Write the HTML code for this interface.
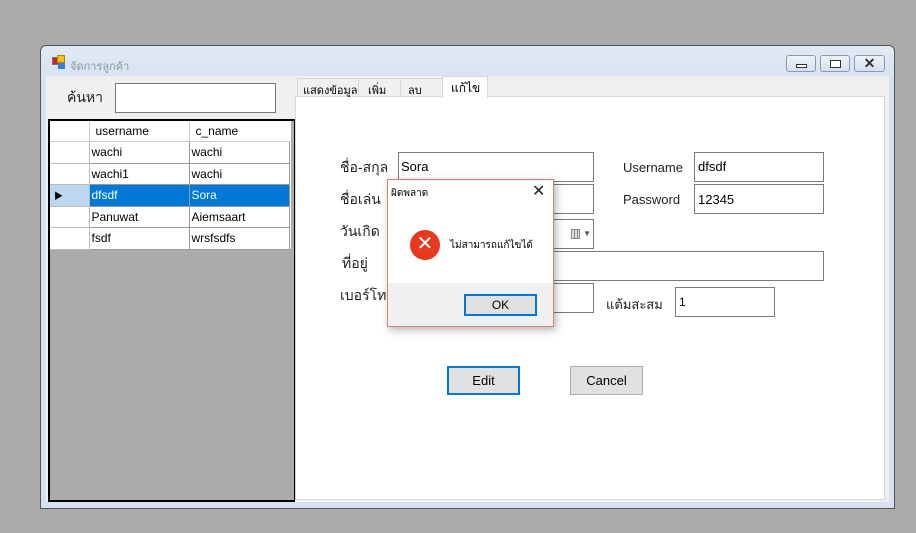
<!DOCTYPE html>
<html><head><meta charset="utf-8"><style>
*{box-sizing:border-box;margin:0;padding:0}
body{width:916px;height:533px;background:#ababab;position:relative;overflow:hidden;font-family:"Liberation Sans","Noto Sans CJK SC",sans-serif;font-size:12px;color:#000}
.a{position:absolute}
.tb{position:absolute;background:#fff;border:1px solid #7a7a7a}
.lbl{position:absolute;font-size:13px;color:#222;white-space:nowrap}
.wb{position:absolute;top:55px;width:30px;height:17px;border:1px solid #8a9ab0;border-radius:3px;background:linear-gradient(#eef3f9,#d5e0ee)}
</style></head><body>
<!-- window -->
<div class="a" style="left:40px;top:45px;width:855px;height:464px;background:linear-gradient(#e1e9f3,#d6e2f1 40px);border:1px solid #555;border-radius:6px 6px 0 0"></div>
<div class="a" style="left:52px;top:57px;width:8px;height:8px;background:#c22;border:1px solid #777"></div>
<div class="a" style="left:57px;top:55px;width:8px;height:8px;background:#f2c21a;border:1px solid #a80"></div>
<div class="a" style="left:58px;top:63px;width:7px;height:6px;background:#3a7de0"></div>
<div class="lbl" style="left:70px;top:57px;font-size:11px;color:#8a96a4">จัดการลูกค้า</div>
<div class="wb" style="left:786px"><div class="a" style="left:9px;top:8px;width:11px;height:4px;border:1px solid #333;background:#fff"></div></div>
<div class="wb" style="left:820px"><div class="a" style="left:9px;top:4px;width:11px;height:8px;border:1px solid #333;background:#fff"></div></div>
<div class="wb" style="left:854px;width:31px;text-align:center;line-height:15px;font-size:14px;color:#333;font-weight:bold">✕</div>
<!-- client -->
<div class="a" style="left:46px;top:76px;width:843px;height:426px;background:#f0f0f0"></div>
<div class="lbl" style="left:67px;top:87px;font-size:14px">ค้นหา</div>
<div class="tb" style="left:115px;top:83px;width:161px;height:30px;border-color:#777"></div>
<!-- grid -->
<div class="a" style="left:48px;top:119px;width:247px;height:383px;background:#ababab;border:2px solid #000;border-right-width:1px"></div>
<div class="a" style="left:50px;top:121px;width:241px;height:128px;background:#fff">
<table style="border-collapse:collapse;font-size:12px;width:240px;table-layout:fixed">
<tr style="height:20px"><td style="width:39px;border-right:1px solid #ccc;border-bottom:1px solid #ccc"></td><td style="width:100px;padding-left:6px;border-right:1px solid #ccc;border-bottom:1px solid #ccc">username</td><td style="padding-left:6px;border-bottom:1px solid #ccc">c_name</td></tr>
<tr style="height:22px"><td style="border:1px solid #bbb;border-left:0"></td><td style="border:1px solid #999;padding-left:2px">wachi</td><td style="border:1px solid #999;padding-left:2px">wachi</td></tr>
<tr style="height:21px"><td style="border:1px solid #bbb;border-left:0"></td><td style="border:1px solid #999;padding-left:2px">wachi1</td><td style="border:1px solid #999;padding-left:2px">wachi</td></tr>
<tr style="height:22px"><td style="background:#bcd7ef;border:1px solid #bbb;border-left:0;font-size:9px;padding-left:4px">▶</td><td style="background:#0078d7;color:#fff;border:1px solid #999;padding-left:2px">dfsdf</td><td style="background:#0078d7;color:#fff;border:1px solid #999;padding-left:2px">Sora</td></tr>
<tr style="height:21px"><td style="border:1px solid #bbb;border-left:0"></td><td style="border:1px solid #999;padding-left:2px">Panuwat</td><td style="border:1px solid #999;padding-left:2px">Aiemsaart</td></tr>
<tr style="height:22px"><td style="border:1px solid #bbb;border-left:0"></td><td style="border:1px solid #999;padding-left:2px">fsdf</td><td style="border:1px solid #999;padding-left:2px">wrsfsdfs</td></tr>
</table></div>
<!-- tabs -->
<div class="a" style="left:295px;top:96px;width:590px;height:404px;background:#fff;border:1px solid #d8d8d8"></div>
<div class="a" style="left:297px;top:78px;width:62px;height:19px;border:1px solid #d8d8d8;background:#f0f0f0;font-size:11px;padding:2px 0 0 5px">แสดงข้อมูล</div>
<div class="a" style="left:358px;top:78px;width:43px;height:19px;border:1px solid #d8d8d8;background:#f0f0f0;font-size:11px;padding:2px 0 0 9px">เพิ่ม</div>
<div class="a" style="left:400px;top:78px;width:43px;height:19px;border:1px solid #d8d8d8;background:#f0f0f0;font-size:11px;padding:2px 0 0 7px">ลบ</div>
<div class="a" style="left:442px;top:76px;width:46px;height:22px;border:1px solid #d8d8d8;border-bottom:0;background:#fff;font-size:12px;padding:2px 0 0 8px">แก้ไข</div>
<!-- form -->
<div class="lbl" style="left:340px;top:157px;font-size:14px">ชื่อ-สกุล</div>
<div class="tb" style="left:398px;top:152px;width:196px;height:30px;font-size:13px;padding:6px 2px">Sora</div>
<div class="lbl" style="left:340px;top:189px;font-size:14px">ชื่อเล่น</div>
<div class="tb" style="left:398px;top:184px;width:196px;height:30px"></div>
<div class="lbl" style="left:340px;top:221px;font-size:14px">วันเกิด</div>
<div class="tb" style="left:398px;top:219px;width:196px;height:30px"><div class="a" style="right:13px;top:9px;width:9px;height:10px;border:1px solid #888;background:repeating-linear-gradient(90deg,#ddd 0 2px,#888 2px 3px)"></div><div class="a" style="right:2px;top:9px;font-size:8px;color:#456">▼</div></div>
<div class="lbl" style="left:342px;top:253px;font-size:14px">ที่อยู่</div>
<div class="tb" style="left:398px;top:251px;width:426px;height:30px"></div>
<div class="lbl" style="left:340px;top:285px;font-size:14px">เบอร์โทร</div>
<div class="tb" style="left:398px;top:283px;width:196px;height:30px"></div>
<div class="lbl" style="left:623px;top:160px;font-size:13px">Username</div>
<div class="tb" style="left:694px;top:152px;width:130px;height:30px;font-size:13px;padding:6px 3px">dfsdf</div>
<div class="lbl" style="left:623px;top:192px;font-size:13px">Password</div>
<div class="tb" style="left:694px;top:184px;width:130px;height:30px;font-size:13px;padding:7px 3px">12345</div>
<div class="lbl" style="left:606px;top:294px;font-size:13px">แต้มสะสม</div>
<div class="tb" style="left:675px;top:287px;width:100px;height:30px;font-size:12px;padding:7px 3px">1</div>
<div class="a" style="left:447px;top:366px;width:73px;height:29px;border:2px solid #0078d7;background:#e1e1e1;text-align:center;line-height:25px;font-size:13px">Edit</div>
<div class="a" style="left:570px;top:366px;width:73px;height:29px;border:1px solid #adadad;background:#e1e1e1;text-align:center;line-height:27px;font-size:13px">Cancel</div>
<!-- dialog -->
<div class="a" style="left:387px;top:179px;width:167px;height:148px;background:#fff;border:1px solid #e0806f;box-shadow:2px 3px 8px rgba(0,0,0,.3)">
<div class="a" style="left:3px;top:6px;font-size:10px">ผิดพลาด</div>
<div class="a" style="left:144px;top:1px;font-size:16px;color:#222">✕</div>
<div class="a" style="left:22px;top:50px;width:30px;height:30px;border-radius:50%;background:#e8391e;color:#fff;text-align:center;line-height:29px;font-size:20px">✕</div>
<div class="a" style="left:62px;top:58px;font-size:10px">ไม่สามารถแก้ไขได้</div>
<div class="a" style="left:0;top:103px;width:165px;height:43px;background:#f0f0f0"></div>
<div class="a" style="left:76px;top:114px;width:73px;height:22px;border:2px solid #0078d7;background:#e1e1e1;text-align:center;line-height:18px;font-size:12px">OK</div>
</div>
</body></html>
